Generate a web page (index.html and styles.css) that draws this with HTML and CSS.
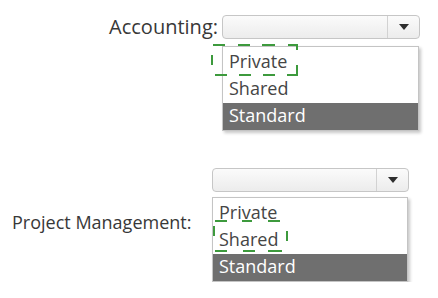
FILE: index.html
```html
<!DOCTYPE html>
<html lang="en">
<head>
  <meta charset="UTF-8">
  <meta name="viewport" content="width=device-width, initial-scale=1.0">
  <title>Sharing options</title>
  <link rel="stylesheet" href="styles.css">
</head>
<body>
  <div class="form">
    <div class="field field-acct">
      <label class="label">Accounting:</label>
      <div class="combo">
        <div class="select">
          <span class="arrow-box"><span class="arrow"></span></span>
        </div>
        <ul class="list">
          <li>Private</li>
          <li>Shared</li>
          <li class="selected">Standard</li>
        </ul>
        <!-- dashed highlight round "Private" -->
        <svg class="mark mark-acct" width="88" height="33" viewBox="0 0 88 33">
          <path d="M2 1H14M27 1H39M51 1H64M77 1H86V6" />
          <path d="M1 11V21" />
          <path d="M86 21V31H76M64 31H52M40 31H28M16 31H4" />
        </svg>
      </div>
    </div>

    <div class="field field-pm">
      <label class="label">Project Management:</label>
      <div class="combo">
        <div class="select">
          <span class="arrow-box"><span class="arrow"></span></span>
        </div>
        <ul class="list">
          <li>Private</li>
          <li>Shared</li>
          <li class="selected">Standard</li>
        </ul>
        <!-- dashed highlight round "Shared" -->
        <svg class="mark mark-pm" width="80" height="35" viewBox="0 0 80 35">
          <path d="M3 2H15M30 2H40M56 2H68" />
          <path d="M2 7V17M75 12V22" />
          <path d="M3 32H15M31 32H43M56 32H70" />
        </svg>
      </div>
    </div>
  </div>
</body>
</html>
```

FILE: styles.css
```css
*{
  box-sizing: border-box;
  margin: 0;
  padding: 0;
}
body{
  background: #fff;
  font-family: "Open Sans", "Noto Sans", sans-serif;
  color: #3a3a3a;
}
.form{
  padding-top: 15px;
}
.field{
  display: flex;
}
.label{
  font-size: 20px;
  line-height: 24px;
  color: #383838;
}
.field-acct .label{
  width: 218px;
  margin-right: 4px;
  text-align: right;
}
.field-acct .combo{
  width: 198px;
}
.field-pm{
  margin-top: 37px;
  padding-left: 12px;
  align-items: center;
}
.field-pm .label{
  font-size: 18px;
  width: 200px;
  margin-top: -6px;
}
.field-pm .combo{
  width: 197px;
}
.combo{
  position: relative;
}
.select{
  height: 24px;
  border: 1px solid #c6c6c6;
  border-radius: 4px;
  background: linear-gradient(#fbfbfb, #ececec);
  display: flex;
  justify-content: flex-end;
}
.arrow-box{
  width: 32px;
  border-left: 1px solid #d2d2d2;
  display: flex;
  align-items: center;
  justify-content: center;
}
.arrow{
  width: 0;
  height: 0;
  border-left: 5px solid transparent;
  border-right: 5px solid transparent;
  border-top: 6px solid #2e2e2e;
}
.list{
  list-style: none;
  margin-top: 7px;
  margin-right: 1px;
  padding-top: 2px;
  border: 1px solid #c4c4c4;
  background: #fff;
  box-shadow: 2px 2px 3px rgba(0, 0, 0, 0.22);
}
.field-pm .list{
  margin-top: 5px;
}
.list li{
  height: 27px;
  line-height: 25px;
  padding-left: 6px;
  font-size: 18px;
  color: #454545;
}
.list li.selected{
  background: #6f6f6f;
  color: #fff;
}
.mark{
  position: absolute;
}
.mark path{
  fill: none;
  stroke: #3d9a3d;
  stroke-width: 2;
}
.mark-acct{
  left: -11px;
  top: 29px;
}
.mark-pm{
  left: 0;
  top: 51px;
}
```
